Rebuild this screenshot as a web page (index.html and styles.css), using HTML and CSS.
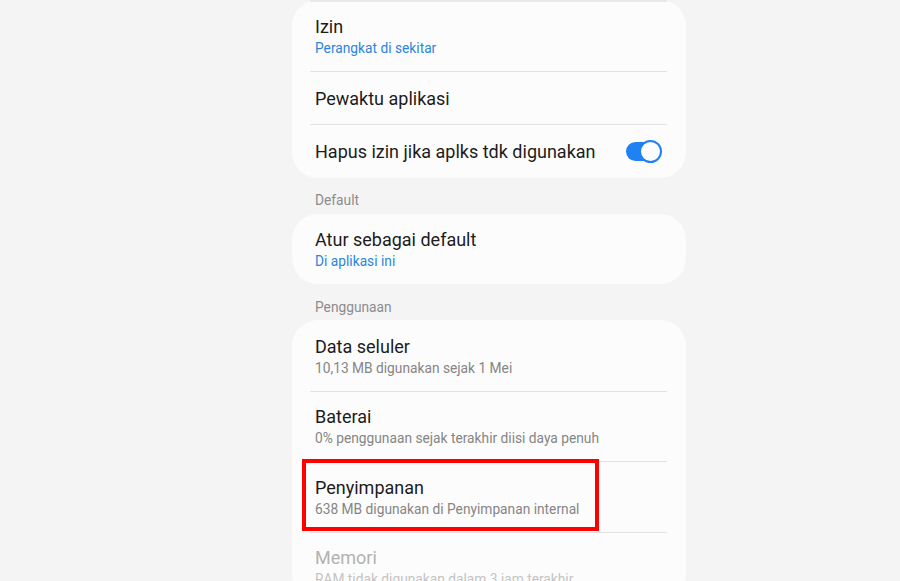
FILE: index.html
```html
<!DOCTYPE html>
<html lang="id">
<head>
<meta charset="utf-8">
<link rel="stylesheet" href="styles.css">
</head>
<body>
<main class="settings">
  <section class="card card-top">
    <div class="row two">
      <div class="title">Izin</div>
      <div class="sub blue">Perangkat di sekitar</div>
    </div>
    <div class="row one">
      <div class="title">Pewaktu aplikasi</div>
    </div>
    <div class="row one toggle-row">
      <div class="title">Hapus izin jika aplks tdk digunakan</div>
      <span class="toggle"><span class="thumb"></span></span>
    </div>
  </section>

  <div class="section-label">Default</div>
  <section class="card">
    <div class="row two">
      <div class="title">Atur sebagai default</div>
      <div class="sub blue">Di aplikasi ini</div>
    </div>
  </section>

  <div class="section-label">Penggunaan</div>
  <section class="card">
    <div class="row two">
      <div class="title">Data seluler</div>
      <div class="sub">10,13 MB digunakan sejak 1 Mei</div>
    </div>
    <div class="row two">
      <div class="title">Baterai</div>
      <div class="sub">0% penggunaan sejak terakhir diisi daya penuh</div>
    </div>
    <div class="row two highlighted">
      <div class="title">Penyimpanan</div>
      <div class="sub">638 MB digunakan di Penyimpanan internal</div>
      <span class="redbox"></span>
    </div>
    <div class="row two disabled">
      <div class="title">Memori</div>
      <div class="sub">RAM tidak digunakan dalam 3 jam terakhir</div>
    </div>
  </section>
</main>
</body>
</html>
```
FILE: styles.css
```css
* { box-sizing: border-box; }
html, body {
  margin: 0;
  padding: 0;
  background: #f4f4f4;
  width: 900px;
  height: 581px;
  overflow: hidden;
  font-family: Roboto, "Noto Sans", sans-serif;
}
.settings {
  margin-left: 292px;
  width: 394px;
  display: flex;
  flex-direction: column;
}
.card {
  background: #fcfcfc;
  border-radius: 26px;
  display: flex;
  flex-direction: column;
}
.card-top {
  position: relative;
}
.card-top::before {
  content: "";
  position: absolute;
  top: 0;
  left: 18px;
  right: 19px;
  height: 2px;
  background: #e8e8e8;
}
.row {
  position: relative;
  display: flex;
  flex-direction: column;
  justify-content: center;
  padding: 0 23px;
}
.row + .row::before {
  content: "";
  position: absolute;
  top: 0;
  left: 18px;
  right: 19px;
  height: 1px;
  background: #e2e2e2;
}
.row.two { height: 70.5px; padding-top: 2px; }
.row.one { height: 53.5px; padding-top: 2px; }
.title {
  font-size: 18px;
  color: #1c1c1c;
  line-height: 23px;
  white-space: nowrap;
}
.sub {
  font-size: 13.75px;
  color: #858585;
  line-height: 20px;
  white-space: nowrap;
}
.sub.blue { color: #2b84de; }
.toggle-row {
  flex-direction: row;
  align-items: center;
  justify-content: space-between;
  padding-right: 25px;
}
.toggle {
  position: relative;
  width: 35px;
  height: 19px;
  border-radius: 10px;
  background: #1f82f2;
  display: block;
}
.toggle .thumb {
  position: absolute;
  right: -1px;
  top: -2px;
  width: 23px;
  height: 23px;
  border-radius: 50%;
  background: #fcfcfc;
  border: 2px solid #1f82f2;
}
.section-label {
  font-size: 13.75px;
  color: #8c8c8c;
  padding: 0 23px;
  height: 36px;
  display: flex;
  align-items: center;
  padding-top: 9px;
}
.disabled .title { color: #b2b2b2; }
.disabled .sub { color: #c4c4c4; }
.redbox {
  position: absolute;
  left: 10px;
  top: -2px;
  width: 297px;
  height: 72px;
  border: 4px solid #ff0000;
}
```
